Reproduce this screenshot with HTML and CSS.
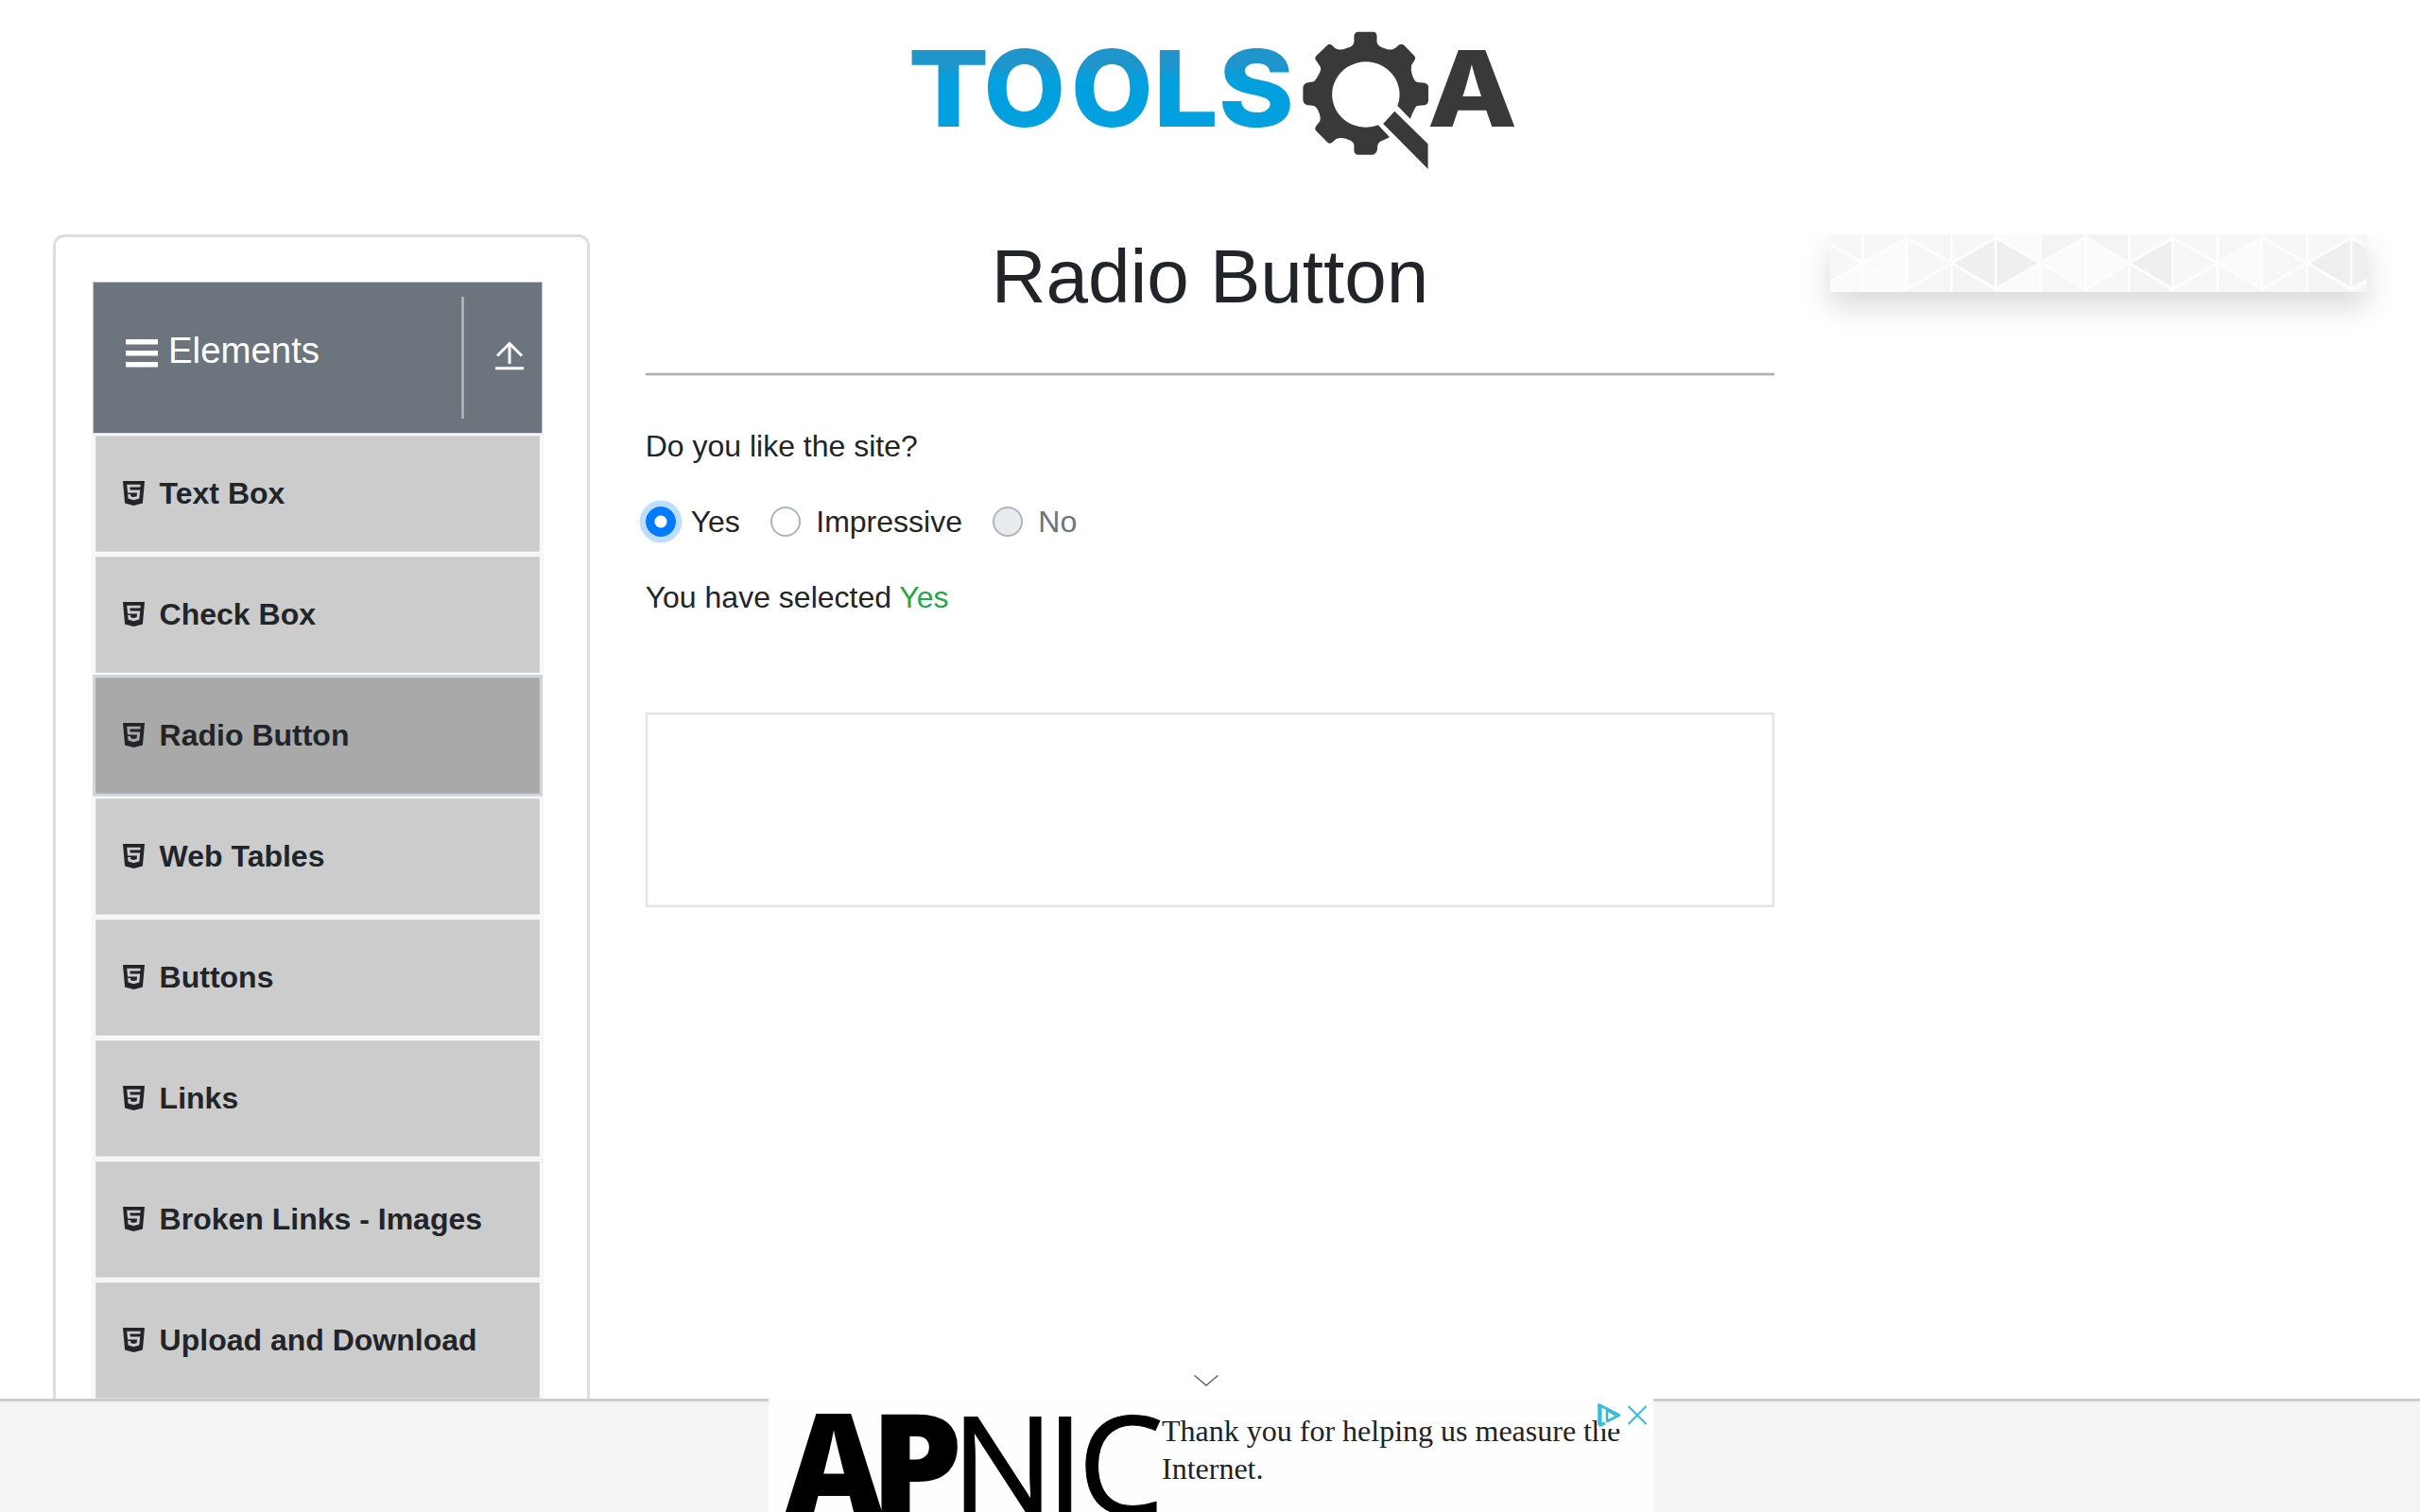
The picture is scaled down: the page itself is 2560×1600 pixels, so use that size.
FILE: index.html
```html
<!DOCTYPE html>
<html lang="en">
<head>
<meta charset="utf-8">
<title>Radio Button</title>
<link rel="stylesheet" href="styles.css">
</head>
<body>
<svg class="defs" aria-hidden="true">
  <symbol id="html5" viewBox="0 0 384 448" preserveAspectRatio="none">
    <path fill-rule="evenodd" d="M0 0l35 403L192 448l157-45L384 0zM308 112H124l4 51h176l-14 156-98 29v1h-1l-98-30-6-79h48l3 40 53 14 54-14 6-65H84L71 64h241z"/>
  </symbol>
</svg>
<header class="top">
  <svg class="logo" width="700" height="190" viewBox="0 0 700 190">
    <defs><linearGradient id="blue" gradientUnits="userSpaceOnUse" x1="0" y1="42" x2="0" y2="124"><stop offset="0" stop-color="#1f95cc"/><stop offset=".2" stop-color="#1f95cc"/><stop offset=".4" stop-color="#03a0e0"/></linearGradient></defs>
    <g class="logo-tools" fill="url(#blue)">
      <text x="20.500" y="124" textLength="86" lengthAdjust="spacingAndGlyphs">T</text>
      <text x="100.500 193" y="124">OO</text>
      <text x="280" y="124" textLength="149" lengthAdjust="spacingAndGlyphs">LS</text>
    </g>
    <svg width="700" height="190" viewBox="0 0 1568 570" preserveAspectRatio="none" fill="#393939">
      <path d="M1112 71H1150Q1157 73 1157 85V104Q1160 118 1176 124Q1190 132 1201 122L1210 112Q1215 108 1220 112L1246 148Q1250 153 1247 160L1239 176Q1237 190 1240 205Q1245 228 1252 231L1270 233Q1279 236 1279 246V290Q1278 302 1268 304L1252 306Q1246 312 1236 347L1206 306A80 104 0 1 0 1160 367L1187 405Q1178 413 1165 419Q1158 425 1158 440V445Q1156 458 1148 461H1110Q1103 458 1103 448V430Q1101 417 1085 411Q1070 404 1060 412L1050 423Q1046 427 1041 423L1012 384Q1009 378 1013 370L1022 355Q1025 345 1020 328Q1016 312 1008 306L990 303Q982 298 982 285V250Q982 238 990 233L1008 229Q1014 222 1020 205Q1027 187 1022 180L1012 160Q1009 153 1013 148L1041 112Q1046 108 1051 114L1058 123Q1070 132 1085 123Q1101 118 1103 104V85Q1103 73 1112 71Z"/>
      <path d="M1199 323L1278 427V506L1172 363Z"/>
    </svg>
    <text class="logo-a" x="570" y="124" textLength="95" lengthAdjust="spacingAndGlyphs">A</text>
  </svg>
</header>

<div class="page">
  <aside class="sidebar">
    <div class="group">
      <svg class="menu-icon" viewBox="0 0 34 30"><path d="M0 0h34v5.500H0zM0 12h34v5.500H0zM0 24h34v5.500H0z"/></svg>
      <span class="group-title">Elements</span>
      <span class="group-toggle">
        <svg viewBox="0 0 30 31" width="30" height="31" fill="none" stroke="#fff" stroke-width="3"><path d="M15 24V2.500M2 15.500L15 2.500L28 15.500M0 28.800H30"/></svg>
      </span>
    </div>
    <ul class="menu">
      <li><svg><use href="#html5"/></svg><span>Text Box</span></li>
      <li><svg><use href="#html5"/></svg><span>Check Box</span></li>
      <li class="active"><svg><use href="#html5"/></svg><span>Radio Button</span></li>
      <li><svg><use href="#html5"/></svg><span>Web Tables</span></li>
      <li><svg><use href="#html5"/></svg><span>Buttons</span></li>
      <li><svg><use href="#html5"/></svg><span>Links</span></li>
      <li><svg><use href="#html5"/></svg><span>Broken Links - Images</span></li>
      <li><svg><use href="#html5"/></svg><span>Upload and Download</span></li>
    </ul>
  </aside>

  <main class="content">
    <h1>Radio Button</h1>
    <div class="rule"></div>
    <div class="form">
      <p>Do you like the site?</p>
      <div class="radios">
        <label class="radio"><i class="dot checked"></i>Yes</label>
        <label class="radio"><i class="dot"></i>Impressive</label>
        <label class="radio disabled"><i class="dot"></i>No</label>
      </div>
      <p>You have selected <span class="success">Yes</span></p>
    </div>
    <div class="slot"></div>
  </main>

  <aside class="banner">
    <svg width="568" height="61" viewBox="88 84 1392 183" preserveAspectRatio="none">
      <rect x="88" y="84" width="1392" height="183" fill="#f7f7f7"/>
      <g fill="#fbfbfb">
        <path d="M172 175L287 95V258ZM172 175V267H287ZM517 95V84H633V175ZM517 258L633 175V267H517ZM633 175L750 95V258ZM750 95L863 175L750 258ZM1092 175L1207 95V258ZM88 233L172 175V267H88Z"/>
      </g>
      <g fill="#f4f4f4"><path d="M633 84H750L633 175ZM750 84H863V175ZM403 175V267H517ZM863 175V267H976ZM1325 175V267H1439Z"/></g>
      <g fill="#efefef"><path d="M410 175L510 105Q517 102 524 105L628 175L524 246Q517 249 510 246ZM868 175L976 103V249ZM1330 175L1432 105Q1439 102 1446 105L1480 130V222L1446 246Q1439 249 1432 246Z"/></g>
      <path fill="none" stroke="#fefefe" stroke-width="6" d="M172 84V267M287 84V267M403 84V267M517 84V267M633 84V267M750 84V267M863 84V267M976 84V267M1092 84V267M1207 84V267M1325 84V267M1439 84V267"/>
      <path fill="none" stroke="#fdfdfd" stroke-width="8" d="M88 115L172 175L287 95L403 175L517 95L633 175L750 95L863 175L976 95L1092 175L1207 95L1325 175L1439 95L1480 120M88 235L172 175L287 258L403 175L517 258L633 175L750 258L863 175L976 258L1092 175L1207 258L1325 175L1439 258L1480 230"/>
    </svg>
  </aside>
</div>

<footer class="anchor">
  <svg class="chevron" viewBox="0 0 26 12"><path d="M.5 .5L13 11L25.500 .5" fill="none" stroke="#666" stroke-width="1.500"/></svg>
  <div class="ad">
    <svg class="apnic" width="416" height="120" viewBox="0 0 416 120">
      <text y="122.500" class="heavy" x="17" textLength="104" lengthAdjust="spacingAndGlyphs">A</text>
      <text y="122.500" class="heavy" x="107.500" textLength="98" lengthAdjust="spacingAndGlyphs">P</text>
      <text y="122.500" class="thin" x="193 293.500 327">NIC</text>
    </svg>
    <p class="ad-text">Thank you for helping us measure the Internet.</p>
    <svg class="ad-marks" viewBox="0 0 60 32" width="60" height="32">
      <rect width="60" height="32" fill="#fefefe"/>
      <g fill="none" stroke="#35bcd8"><path stroke-width="2.600" stroke-linejoin="round" d="M2.500 28V6.500L24 17.500L11 24V12L20 17.500"/><path stroke-width="3" d="M4 8V28L9 26"/><path stroke-width="2" d="M33.500 8L52.500 27M52.500 8L33.500 27"/></g>
    </svg>
  </div>
</footer>
</body>
</html>
```
FILE: styles.css
```css
* { box-sizing: border-box; }
body {
  margin: 0;
  width: 2560px;
  height: 1600px;
  overflow: hidden;
  display: flex;
  flex-direction: column;
  background: #fff;
  color: #212529;
  font: 32px/48px "Liberation Sans", Arial, sans-serif;
}
p, h1, ul { margin: 0; padding: 0; }
.defs { display: none; }

.top { height: 248px; flex: none; padding: 10px 0 0 940px; }
.logo { display: block; }
.logo-tools { font: 800 112px Inter, sans-serif; }
.logo-a { font: 800 112px Inter, sans-serif; fill: #393939; }

.page {
  flex: none;
  height: 1232px;
  overflow: hidden;
  display: grid;
  grid-template-columns: 568px 1194.660px 568px;
  column-gap: 58.670px;
  padding-left: 56px;
  align-items: start;
}

.sidebar {
  height: 1400px;
  border: 3px solid #dedede;
  border-radius: 12px;
  padding: 47px 47px 0 39px;
}
.group {
  width: 476px;
  height: 161px;
  border: 1px solid #c6c9cc;
  background: #6c757d;
  color: #fff;
  display: flex;
  align-items: flex-start;
  padding: 15px 0 0 34px;
}
.menu-icon { width: 34px; height: 30px; margin-top: 45px; fill: #fff; }
.group-title { flex: 1; font-size: 38.400px; line-height: 58px; margin: 28px 0 0 11px; }
.group-toggle {
  width: 85px;
  height: 129px;
  border-left: 3px solid #aeaeae;
  padding: 47px 0 0 33px;
}
.group-toggle svg { display: block; }
.menu { list-style: none; width: 476px; }
.menu li {
  height: 128px;
  display: flex;
  align-items: center;
  gap: 15.600px;
  padding: 0 0 2px 29px;
  font-weight: bold;
  border: solid #f8f9fa;
  border-width: 2px 3px 3px;
  background: #ccc;
  box-shadow: inset 0 0 0 1px #d6d6d6, 0 0 0 .5px #eee;
}
.menu svg { width: 23px; height: 26px; fill: #212529; }
.menu .active {
  background: #a9a9a9;
  border-color: #d0d6dc;
  border-width: 3px;
  margin-top: -1px;
  height: 129px;
  box-shadow: inset 0 0 0 1px #b1b4b6;
}

h1 { font-weight: 400; font-size: 80px; line-height: 90px; text-align: center; }
.rule { height: 4px; margin-top: 56px; background: #afafaf; border: solid #e6e6e6; border-width: 1px 0; }
.form { display: flex; flex-direction: column; gap: 32px; margin-top: 50px; }
.radios { display: flex; gap: 32.400px; }
.radio { display: flex; align-items: center; gap: 16px; }
.dot { width: 32px; height: 32px; border: 2.500px solid #adb5bd; border-radius: 50%; background: #fff; }
.checked { border: 0; background: radial-gradient(circle, #fff 6px, #007bff 7px); box-shadow: 0 0 0 6.400px #bfdeff; }
.disabled { color: #6c757d; }
.disabled .dot { background: #e9ecef; }
.success { color: #28a745; }
.slot { height: 206px; margin-top: 98px; border: 2px solid #e4e4e4; box-shadow: inset 0 0 0 1px #f4f4f4; }

.banner { height: 61px; box-shadow: 0 16px 32px rgba(0, 0, 0, .15); }
.banner svg { display: block; }

.anchor {
  position: relative;
  flex: none;
  height: 120px;
  border-top: 3px solid #ccc;
  background: #f4f4f4;
}
.chevron { position: absolute; left: 1262.500px; top: -28px; width: 26px; height: 12px; }
.ad {
  position: relative;
  width: 936px;
  height: 120px;
  margin: -3px 0 0 813px;
  background: #fefefe;
  display: flex;
  overflow: hidden;
}
.apnic { flex: none; }
.heavy { font: 800 148.500px "Open Sans", sans-serif; }
.thin { font: 400 145px "Open Sans", sans-serif; stroke: #000; stroke-width: 1px; }
.ad-text {
  width: 500px;
  margin-top: 14px;
  color: #222;
  font: 32px/40px "Liberation Serif", "Times New Roman", serif;
}
.ad-marks { position: absolute; right: 0; top: 0; }
```
